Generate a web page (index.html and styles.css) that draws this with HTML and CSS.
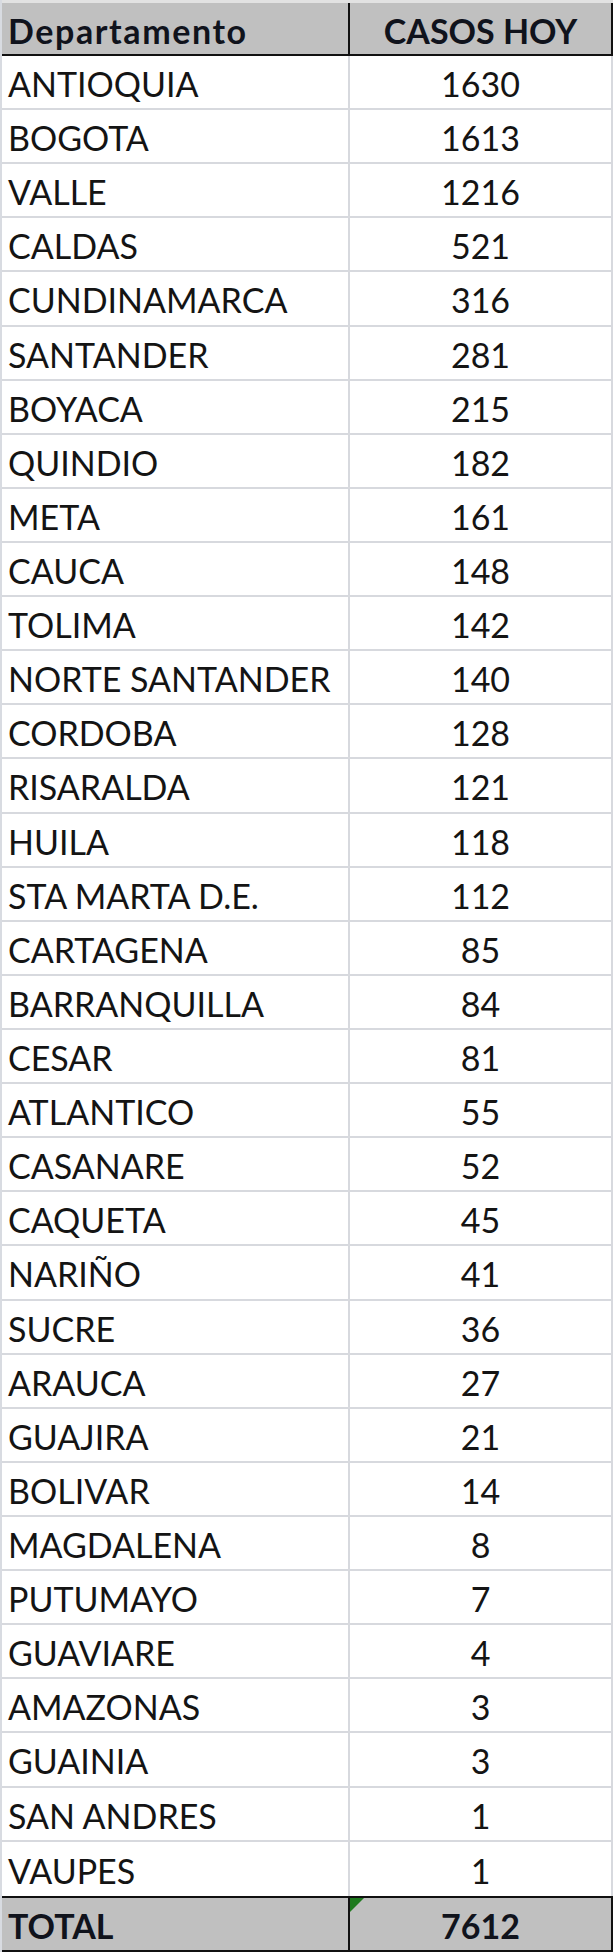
FILE: index.html
```html
<!DOCTYPE html>
<html lang="es">
<head>
<meta charset="utf-8">
<title>Casos hoy por departamento</title>
<link rel="stylesheet" href="styles.css">
</head>
<body>
<div class="sheet">
  <div class="row head">
    <div class="cell name">Departamento</div>
    <div class="cell val">CASOS HOY</div>
  </div>
  <div class="row"><div class="cell name">ANTIOQUIA</div><div class="cell val">1630</div></div>
  <div class="row"><div class="cell name">BOGOTA</div><div class="cell val">1613</div></div>
  <div class="row"><div class="cell name">VALLE</div><div class="cell val">1216</div></div>
  <div class="row"><div class="cell name">CALDAS</div><div class="cell val">521</div></div>
  <div class="row"><div class="cell name">CUNDINAMARCA</div><div class="cell val">316</div></div>
  <div class="row"><div class="cell name">SANTANDER</div><div class="cell val">281</div></div>
  <div class="row"><div class="cell name">BOYACA</div><div class="cell val">215</div></div>
  <div class="row"><div class="cell name">QUINDIO</div><div class="cell val">182</div></div>
  <div class="row"><div class="cell name">META</div><div class="cell val">161</div></div>
  <div class="row"><div class="cell name">CAUCA</div><div class="cell val">148</div></div>
  <div class="row"><div class="cell name">TOLIMA</div><div class="cell val">142</div></div>
  <div class="row"><div class="cell name">NORTE SANTANDER</div><div class="cell val">140</div></div>
  <div class="row"><div class="cell name">CORDOBA</div><div class="cell val">128</div></div>
  <div class="row"><div class="cell name">RISARALDA</div><div class="cell val">121</div></div>
  <div class="row"><div class="cell name">HUILA</div><div class="cell val">118</div></div>
  <div class="row"><div class="cell name">STA MARTA D.E.</div><div class="cell val">112</div></div>
  <div class="row"><div class="cell name">CARTAGENA</div><div class="cell val">85</div></div>
  <div class="row"><div class="cell name">BARRANQUILLA</div><div class="cell val">84</div></div>
  <div class="row"><div class="cell name">CESAR</div><div class="cell val">81</div></div>
  <div class="row"><div class="cell name">ATLANTICO</div><div class="cell val">55</div></div>
  <div class="row"><div class="cell name">CASANARE</div><div class="cell val">52</div></div>
  <div class="row"><div class="cell name">CAQUETA</div><div class="cell val">45</div></div>
  <div class="row"><div class="cell name">NARIÑO</div><div class="cell val">41</div></div>
  <div class="row"><div class="cell name">SUCRE</div><div class="cell val">36</div></div>
  <div class="row"><div class="cell name">ARAUCA</div><div class="cell val">27</div></div>
  <div class="row"><div class="cell name">GUAJIRA</div><div class="cell val">21</div></div>
  <div class="row"><div class="cell name">BOLIVAR</div><div class="cell val">14</div></div>
  <div class="row"><div class="cell name">MAGDALENA</div><div class="cell val">8</div></div>
  <div class="row"><div class="cell name">PUTUMAYO</div><div class="cell val">7</div></div>
  <div class="row"><div class="cell name">GUAVIARE</div><div class="cell val">4</div></div>
  <div class="row"><div class="cell name">AMAZONAS</div><div class="cell val">3</div></div>
  <div class="row"><div class="cell name">GUAINIA</div><div class="cell val">3</div></div>
  <div class="row"><div class="cell name">SAN ANDRES</div><div class="cell val">1</div></div>
  <div class="row last"><div class="cell name">VAUPES</div><div class="cell val">1</div></div>
  <div class="row total">
    <div class="cell name">TOTAL</div>
    <div class="cell val"><span class="flag"></span>7612</div>
  </div>
</div>
</body>
</html>
```
FILE: styles.css
```css
html, body {
  margin: 0;
  padding: 0;
  background: #ffffff;
}

body {
  font-family: Lato, "Liberation Sans", sans-serif;
  color: #141414;
}

.sheet {
  width: 613px;
  box-sizing: border-box;
  border-left: 2px solid #d8dbe1;
}

.row {
  display: grid;
  grid-template-columns: 348px 1fr;
  height: 54.12px;
  box-sizing: border-box;
  border-bottom: 2px solid #d7d9de;
}

.cell {
  display: flex;
  align-items: center;
  box-sizing: border-box;
  font-size: 34px;
  padding-top: 3px;
  white-space: nowrap;
}

.name {
  padding-left: 6px;
  border-right: 2px solid #d7d9de;
}

.val {
  justify-content: center;
  border-right: 2px solid #d7d9de;
  position: relative;
}

.head {
  height: 56px;
  background: #c0c0c0;
  border-top: 3px solid #e2e2e2;
  border-bottom: 2px solid #111111;
}

.head .cell,
.total .cell {
  font-weight: 700;
  color: #10131c;
}

.head .name {
  letter-spacing: 1.6px;
}

.head .name,
.total .name {
  border-right-color: #111111;
}

.head .val,
.total .val {
  border-right-color: #111111;
}

.row.last {
  border-bottom: none;
}

.total {
  height: 56px;
  background: #c0c0c0;
  border-top: 2px solid #111111;
  border-bottom: 2px solid #111111;
}

.flag {
  position: absolute;
  left: 0;
  top: 0;
  width: 0;
  height: 0;
  border-top: 14px solid #1f7a1f;
  border-right: 14px solid transparent;
}
```
